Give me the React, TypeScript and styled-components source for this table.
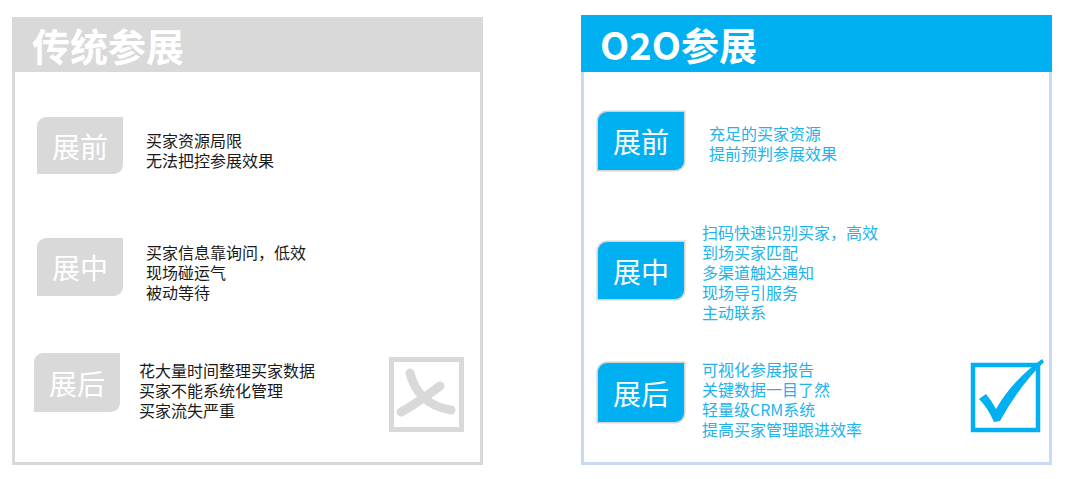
import React from "react";
import styled, { createGlobalStyle } from "styled-components";

const GlobalStyle = createGlobalStyle`
  body {
    margin: 0;
    background: #ffffff;
    font-family: "Noto Sans CJK SC", "Noto Sans", sans-serif;
  }
`;

type Theme = {
  header: string;
  border: string;
  badge: string;
  text: string;
};

const grey: Theme = {
  header: "#d9d9d9",
  border: "#d9d9d9",
  badge: "#d9d9d9",
  text: "#1a1a1a",
};

const blue: Theme = {
  header: "#00b0f0",
  border: "#c9daf6",
  badge: "#00b0f0",
  text: "#22b3ec",
};

type Row = {
  label: string;
  lines: string[];
  top: number;
  shift?: number;
  badgeTop?: number;
  textTop?: number;
  gap: number;
  badgeHeight?: number;
  mark?: boolean;
  markTop?: number;
};

const Page = styled.div`
  display: flex;
  align-items: flex-start;
  padding-left: 12px;
`;

const Card = styled.div<{ $top: number; $height: number; $border: string; $gap: number }>`
  box-sizing: border-box;
  width: 471px;
  height: ${(p) => p.$height}px;
  margin-top: ${(p) => p.$top}px;
  margin-left: ${(p) => p.$gap}px;
  border: 3px solid ${(p) => p.$border};
  border-top: 0;
  display: flex;
  flex-direction: column;
`;

const Header = styled.div<{ $bg: string; $height: number; $pad: number }>`
  height: ${(p) => p.$height}px;
  margin: 0 -3px;
  padding-left: ${(p) => p.$pad}px;
  background: ${(p) => p.$bg};
  display: flex;
  align-items: center;
  color: #ffffff;
  font-size: 38px;
  font-weight: 700;
`;

const Body = styled.div<{ $pad: number }>`
  display: flex;
  flex-direction: column;
  padding-left: ${(p) => p.$pad}px;
`;

const RowBox = styled.div<{ $top: number; $shift: number }>`
  display: flex;
  align-items: flex-start;
  margin-top: ${(p) => p.$top}px;
  margin-left: ${(p) => p.$shift}px;
`;

const Badge = styled.div<{ $bg: string; $top: number; $height: number; $raised: boolean }>`
  flex: none;
  width: 86px;
  height: ${(p) => p.$height}px;
  margin-top: ${(p) => p.$top}px;
  background: ${(p) => p.$bg};
  border-radius: 9px 0 9px 0;
  display: flex;
  align-items: center;
  justify-content: center;
  color: #ffffff;
  font-size: 28px;
  box-shadow: ${(p) => (p.$raised ? "0 0 0 1.5px #d4d4d4" : "none")};
`;

const Lines = styled.div<{ $color: string; $gap: number; $top: number }>`
  margin-left: ${(p) => p.$gap}px;
  margin-top: ${(p) => p.$top}px;
  color: ${(p) => p.$color};
  font-size: 16px;
  line-height: 20px;
  white-space: nowrap;
`;

const Mark = styled.div<{ $top: number; $right: number }>`
  margin-left: auto;
  margin-right: ${(p) => p.$right}px;
  margin-top: ${(p) => p.$top}px;
  display: flex;
`;

const CrossMark = () => (
  <svg width="75" height="75" viewBox="0 0 75 75">
    <rect x="2.5" y="2.5" width="70" height="70" fill="none" stroke="#d9d9d9" strokeWidth="5" />
    <path d="M21 16 C 25 32, 36 49, 62 53" fill="none" stroke="#d9d9d9" strokeWidth="9" strokeLinecap="round" />
    <path d="M51 29 C 40 37, 27 47, 12 55" fill="none" stroke="#d9d9d9" strokeWidth="9" strokeLinecap="round" />
  </svg>
);

const CheckMark = () => (
  <svg width="76" height="76" viewBox="0 -4 76 76" overflow="visible">
    <rect x="2" y="2" width="65" height="65" fill="none" stroke="#00b0f0" strokeWidth="4.5" />
    <path
      d="M8 36 L15 31 Q20 37 25 46 Q42 17 71 -4 L73 -1 Q49 22 29 58 L23 59 Q17 45 8 36 Z"
      fill="#00b0f0"
    />
  </svg>
);

type PanelProps = {
  title: string;
  theme: Theme;
  top: number;
  height: number;
  gap: number;
  headerHeight: number;
  titlePad: number;
  bodyPad: number;
  rows: Row[];
  raised?: boolean;
  mark: React.ReactNode;
  markRight: number;
};

const Panel = ({
  title,
  theme,
  top,
  height,
  gap,
  headerHeight,
  titlePad,
  bodyPad,
  rows,
  raised = false,
  mark,
  markRight,
}: PanelProps) => (
  <Card $top={top} $height={height} $border={theme.border} $gap={gap}>
    <Header $bg={theme.header} $height={headerHeight} $pad={titlePad}>
      {title}
    </Header>
    <Body $pad={bodyPad}>
      {rows.map((row) => (
        <RowBox key={row.label} $top={row.top} $shift={row.shift ?? 0}>
          <Badge
            $bg={theme.badge}
            $top={row.badgeTop ?? 0}
            $height={row.badgeHeight ?? 57}
            $raised={raised}
          >
            {row.label}
          </Badge>
          <Lines $color={theme.text} $gap={row.gap} $top={row.textTop ?? 0}>
            {row.lines.map((line) => (
              <div key={line}>{line}</div>
            ))}
          </Lines>
          {row.mark && (
            <Mark $top={row.markTop ?? 0} $right={markRight}>
              {mark}
            </Mark>
          )}
        </RowBox>
      ))}
    </Body>
  </Card>
);

const leftRows: Row[] = [
  { label: "展前", lines: ["买家资源局限", "无法把控参展效果"], top: 45, textTop: 13, gap: 23 },
  { label: "展中", lines: ["买家信息靠询问，低效", "现场碰运气", "被动等待"], top: 64, textTop: 4, gap: 23, badgeHeight: 58 },
  {
    label: "展后",
    lines: ["花大量时间整理买家数据", "买家不能系统化管理", "买家流失严重"],
    top: 51,
    shift: -3,
    textTop: 7,
    gap: 19,
    badgeHeight: 59,
    mark: true,
    markTop: 4,
  },
];

const rightRows: Row[] = [
  { label: "展前", lines: ["充足的买家资源", "提前预判参展效果"], top: 40, textTop: 11, gap: 25, badgeHeight: 58 },
  {
    label: "展中",
    lines: ["扫码快速识别买家，高效", "到场买家匹配", "多渠道触达通知", "现场导引服务", "主动联系"],
    top: 52,
    badgeTop: 20,
    gap: 18,
  },
  {
    label: "展后",
    lines: ["可视化参展报告", "关键数据一目了然", "轻量级CRM系统", "提高买家管理跟进效率"],
    top: 37,
    badgeTop: 4,
    gap: 18,
    badgeHeight: 59,
    mark: true,
    markTop: 0,
  },
];

const App = () => (
  <>
    <GlobalStyle />
    <Page>
      <Panel
        title="传统参展"
        theme={grey}
        top={17}
        height={448}
        gap={0}
        headerHeight={55}
        titlePad={20}
        bodyPad={22}
        rows={leftRows}
        mark={<CrossMark />}
        markRight={16}
      />
      <Panel
        title="O2O参展"
        theme={blue}
        top={15}
        height={450}
        gap={98}
        headerHeight={57}
        titlePad={19}
        bodyPad={14}
        rows={rightRows}
        raised
        mark={<CheckMark />}
        markRight={2}
      />
    </Page>
  </>
);

export default App;
